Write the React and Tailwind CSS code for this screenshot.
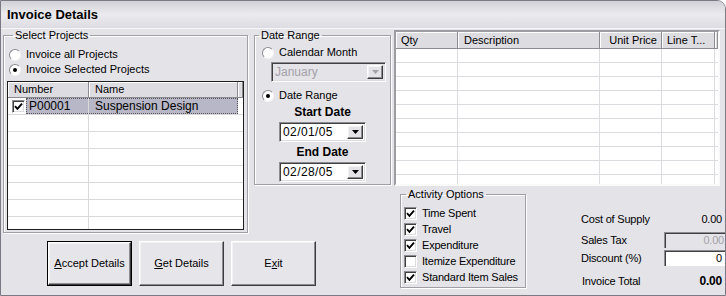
import React from 'react';

// classic win32 bevels
const sunken =
  'border border-t-[#8d8c92] border-l-[#8d8c92] border-b-white border-r-white shadow-[inset_1px_1px_0_#404040,inset_-1px_-1px_0_#dcdbe0]';
const raised =
  'border border-t-white border-l-white border-b-[#3c3c3c] border-r-[#3c3c3c] shadow-[inset_-1px_-1px_0_#8d8c92,inset_1px_1px_0_#f2f2f5]';

const Check = () => (
  <svg width="9" height="9" viewBox="0 0 9 9">
    <polyline points="1,4.2 3.4,6.8 8,1.6" fill="none" stroke="#000" strokeWidth="1.9" />
  </svg>
);

const CheckBox = ({ checked }) => (
  <span className={`w-[13px] h-[13px] bg-white flex items-center justify-center shrink-0 ${sunken}`}>
    {checked && <Check />}
  </span>
);

const Radio = ({ checked, label }) => (
  <div className="flex items-center h-[15px]">
    <span className="w-[12px] h-[12px] rounded-full bg-white border border-t-[#8d8c92] border-l-[#8d8c92] border-b-[#f4f4f6] border-r-[#f4f4f6] flex items-center justify-center shrink-0">
      {checked && <span className="w-[4px] h-[4px] rounded-full bg-black" />}
    </span>
    <span className="ml-[5px] whitespace-nowrap">{label}</span>
  </div>
);

const Arrow = ({ color = '#000' }) => (
  <svg width="7" height="4" viewBox="0 0 7 4">
    <polygon points="0,0 7,0 3.5,4" fill={color} />
  </svg>
);

const DropButton = ({ disabled }) => (
  <span className={`w-[16px] h-full bg-[#e4e3e8] flex items-center justify-center ${raised}`}>
    <Arrow color={disabled ? '#a3a2a8' : '#000'} />
  </span>
);

const DatePicker = ({ value }) => (
  <div className={`w-[87px] h-[20px] bg-white flex items-stretch p-[2px] mx-auto ${sunken}`}>
    <span className="flex-1 pl-[1px] leading-[14px] text-[12px] tracking-[0.4px]">{value}</span>
    <DropButton />
  </div>
);

const Fieldset = ({ legend, className, legendClass, children }) => (
  <fieldset className={`border border-[#a09fa5] shadow-[1px_1px_0_#fff,inset_1px_1px_0_#fff] ${className}`}>
    <legend className={`px-[2px] leading-[13px] ${legendClass}`}>{legend}</legend>
    {children}
  </fieldset>
);

const Button = ({ children, focused }) => (
  <div className={`w-[85px] h-[45px] ${focused ? 'border border-black' : ''}`}>
    <div className={`w-full h-full bg-[#e6e5ea] flex items-center justify-center ${raised}`}>
      {children}
    </div>
  </div>
);

const headCell = 'h-full flex items-center bg-[#dddce1] border-r border-b border-r-[#8d8c92] border-b-[#8d8c92] shadow-[inset_1px_1px_0_#fff]';

export default function App() {
  const projectRows = Array.from({ length: 8 });
  const lineRows = Array.from({ length: 10 });

  return (
    <div className="w-[726px] h-[296px] overflow-hidden bg-[#e4e3e8] border border-[#7a7984] rounded-tr-[9px] text-[11px] text-black font-['Liberation_Sans',Arial,sans-serif] flex flex-col">
      {/* title bar */}
      <div className="h-[28px] shrink-0 bg-gradient-to-b from-[#d2d1d8] via-[#ebebef] to-[#dddce2] border-b border-[#f7f7f9] flex items-center pl-[6px] pt-[1px]">
        <span className="text-[13px] font-bold">Invoice Details</span>
      </div>

      <div className="grid grid-cols-[251px_140px_1fr] grid-rows-[204px_1fr] flex-1 pl-[2px] items-start">
        {/* select projects */}
        <Fieldset legend="Select Projects" className="w-[244px] h-[204px] px-[3px]" legendClass="ml-[6px]">
          <div className="mt-[5px] ml-[2px]">
            <Radio label="Invoice all Projects" />
            <Radio checked label="Invoice Selected Projects" />
          </div>
          <div className="mt-[4px] w-[237px] h-[149px] border border-[#1e1e1e] bg-white overflow-hidden">
            <div className="h-[16px] flex">
              <div className={`${headCell} w-[81px] pl-[6px]`}>Number</div>
              <div className={`${headCell} w-[149px] pl-[6px]`}>Name</div>
              <div className={`${headCell} flex-1`} />
            </div>
            {projectRows.map((_, i) => (
              <div key={i} className="h-[17px] flex border-b border-[#d9d9dc]">
                <div className="w-[81px] border-r border-[#d9d9dc] flex items-center">
                  {i === 0 && (
                    <>
                      <span className="ml-[4px]"><CheckBox checked /></span>
                      <span className="ml-[1px] flex-1 h-full bg-[#b8b7c7] border-y border-l border-dotted border-[#555] flex items-center pl-[2px] text-[12px]">P00001</span>
                    </>
                  )}
                </div>
                <div className={`w-[149px] flex items-center pl-[6px] text-[12px] ${i === 0 ? 'bg-[#b8b7c7] border-y border-r border-dotted border-[#555]' : ''}`}>
                  {i === 0 ? 'Suspension Design' : ''}
                </div>
              </div>
            ))}
          </div>
        </Fieldset>

        {/* date range */}
        <Fieldset legend="Date Range" className="w-[137px] h-[156px]" legendClass="ml-[4px]">
          <div className="mt-[3px] ml-[7px]">
            <Radio label="Calendar Month" />
          </div>
          <div className={`mt-[2px] ml-[16px] w-[115px] h-[20px] bg-[#e4e3e8] flex items-stretch p-[2px] ${sunken}`}>
            <span className="flex-1 pl-[1px] leading-[14px] text-[#a3a2a8] text-[12px]">January</span>
            <DropButton disabled />
          </div>
          <div className="mt-[6px] ml-[7px]">
            <Radio checked label="Date Range" />
          </div>
          <div className="mt-[2px] text-center text-[12px] font-bold leading-[14px]">Start Date</div>
          <div className="mt-[3px]"><DatePicker value="02/01/05" /></div>
          <div className="mt-[3px] text-center text-[12px] font-bold leading-[14px]">End Date</div>
          <div className="mt-[3px]"><DatePicker value="02/28/05" /></div>
        </Fieldset>

        {/* lines grid + totals */}
        <div className="row-span-2 mt-[1px] flex flex-col">
          <div className="w-[326px] h-[156px] bg-white border-2 border-t-[#9d9ca2] border-l-[#9d9ca2] border-b-[#fafafa] border-r-[#fafafa] overflow-hidden">
            <div className="h-[17px] flex">
              <div className={`${headCell} w-[62px] pl-[5px]`}>Qty</div>
              <div className={`${headCell} w-[142px] pl-[6px]`}>Description</div>
              <div className={`${headCell} w-[62px] justify-end pr-[4px]`}>Unit Price</div>
              <div className={`${headCell} w-[53px] pl-[5px]`}>Line T...</div>
              <div className={`${headCell} flex-1`} />
            </div>
            {lineRows.map((_, i) => (
              <div key={i} className="h-[14px] flex border-b border-[#dcdce0]">
                <div className="w-[62px] border-r border-[#dcdce0]" />
                <div className="w-[142px] border-r border-[#dcdce0]" />
                <div className="w-[62px] border-r border-[#dcdce0]" />
                <div className="w-[53px] border-r border-[#dcdce0]" />
              </div>
            ))}
          </div>

          <div className="flex items-start">
            <Fieldset legend="Activity Options" className="ml-[6px] mt-[2px] w-[126px] h-[100px] shrink-0" legendClass="ml-[5px]">
              <div className="mt-[4px] ml-[3px]">
                {[
                  ['Time Spent', true],
                  ['Travel', true],
                  ['Expenditure', true],
                  ['Itemize Expenditure', false],
                  ['Standard Item Sales', true],
                ].map(([label, on]) => (
                  <div key={label} className="h-[16px] flex items-center">
                    <CheckBox checked={on} />
                    <span className="ml-[5px] whitespace-nowrap tracking-[-0.2px]">{label}</span>
                  </div>
                ))}
              </div>
            </Fieldset>

            <div className="ml-[55px] flex-1 flex flex-col tracking-[-0.2px]">
              <div className="mt-[25px] h-[16px] flex items-center justify-between pr-[3px]">
                <span>Cost of Supply</span>
                <span>0.00</span>
              </div>
              <div className="mt-[5px] h-[16px] flex items-center">
                <span>Sales Tax</span>
                <div className="ml-auto w-[61px] h-[16px] border-t border-l border-[#8d8c92] shadow-[inset_1px_1px_0_#404040] text-right pr-[1px] leading-[14px] text-[#a3a2a8]">0.00</div>
              </div>
              <div className="mt-[2px] h-[16px] flex items-center">
                <span>Discount (%)</span>
                <div className="ml-auto w-[61px] h-[16px] bg-white border-t border-l border-[#8d8c92] shadow-[inset_1px_1px_0_#404040] text-right pr-[3px] leading-[14px]">0</div>
              </div>
              <div className="mt-[7px] h-[16px] flex items-center justify-between pr-[3px] pl-[1px]">
                <span>Invoice Total</span>
                <span className="font-bold text-[12px]">0.00</span>
              </div>
            </div>
          </div>
        </div>

        {/* buttons */}
        <div className="col-span-2 mt-[8px] ml-[44px] flex gap-[7px]">
          <Button focused><span><u>A</u>ccept Details</span></Button>
          <Button><span><u>G</u>et Details</span></Button>
          <Button><span>E<u>x</u>it</span></Button>
        </div>
      </div>
    </div>
  );
}
